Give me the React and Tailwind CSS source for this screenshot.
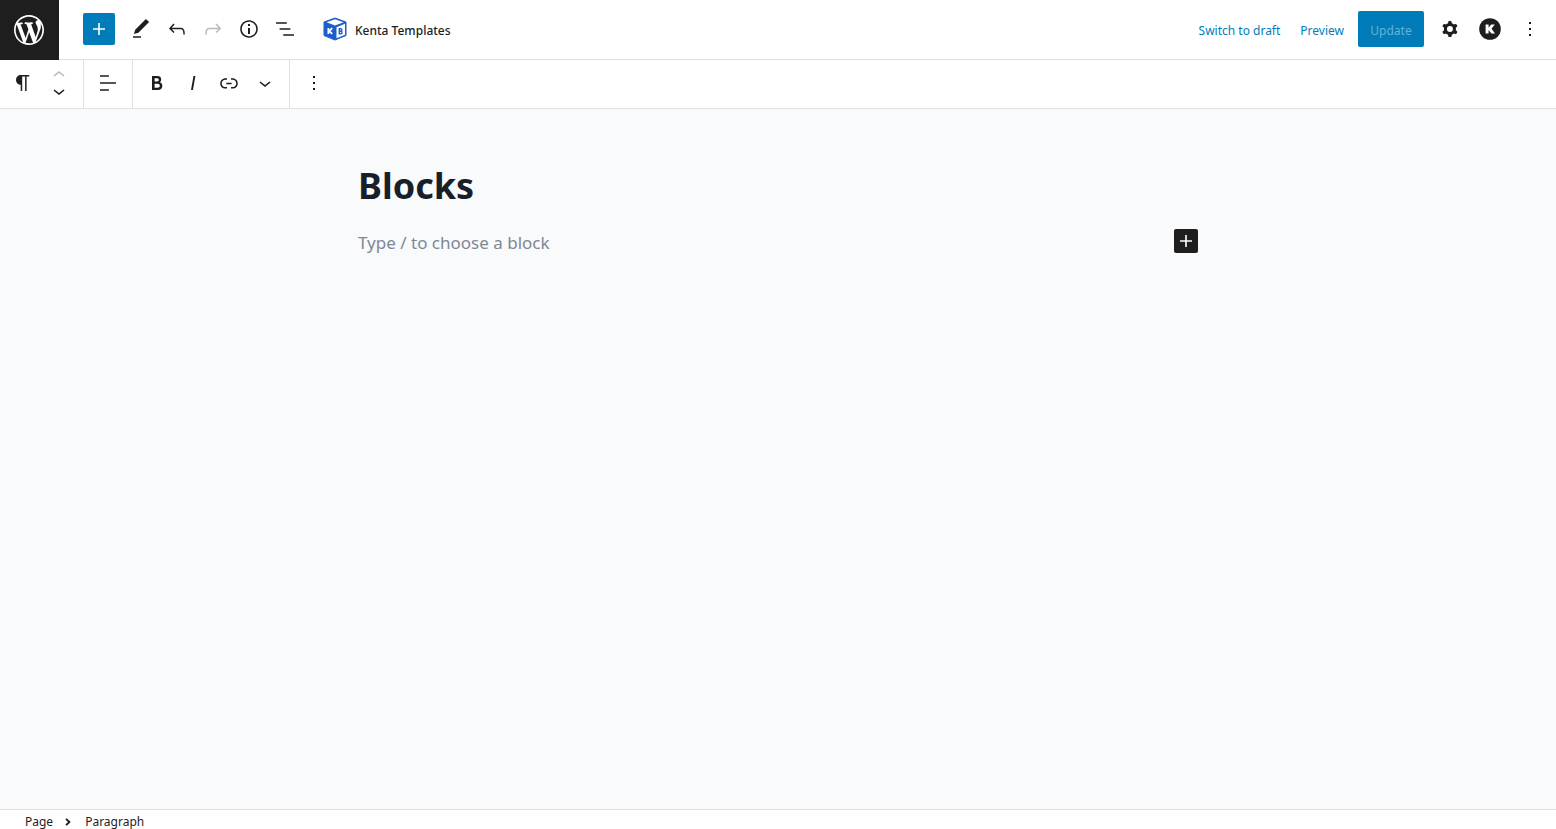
import React from 'react';
import clsx from 'clsx';

/**
 * Editor icons, all on a 24px grid
 */
const ICONS = {
  plus: 'M18 11.2h-5.2V6h-1.6v5.2H6v1.6h5.2V18h1.6v-5.2H18z',
  edit: 'M20.1 5.1L16.9 2 6.2 12.7l-1.3 4.4 4.5-1.3L20.1 5.1zM4 20.8h8v-1.5H4v1.5z',
  undo: 'M18.3 11.7c-.6-.6-1.4-.9-2.3-.9H6.7l2.9-3.3-1.1-1-4.5 5L8.5 16l1-1-2.7-2.7H16c.5 0 .9.2 1.3.5 1 1 1 3.4 1 4.5v.3h1.5v-.2c0-1.5 0-4.3-1.5-5.7z',
  redo: 'M15.6 6.5l-1.1 1 2.9 3.3H8c-.9 0-1.7.3-2.3.9-1.4 1.5-1.4 4.2-1.4 5.6v.2h1.5v-.3c0-1.1 0-3.5 1-4.5.3-.3.7-.5 1.3-.5h9.2L14.5 15l1.1 1.1 4.6-4.6-4.6-5z',
  info: 'M12 3.2c-4.8 0-8.8 3.9-8.8 8.8 0 4.8 3.9 8.8 8.8 8.8 4.8 0 8.8-3.9 8.8-8.8 0-4.8-4-8.8-8.8-8.8zm0 16c-4 0-7.2-3.3-7.2-7.2C4.8 8 8 4.8 12 4.8s7.2 3.3 7.2 7.2c0 4-3.2 7.2-7.2 7.2zM11 17h2v-6h-2v6zm0-8h2V7h-2v2z',
  listView: 'M13.8 5.2H3v1.5h10.8V5.2zm-3.6 12v1.5H21v-1.5H10.2zm7.2-6H6.6v1.5h10.8v-1.5z',
  paragraph: 'M18.3 4H9.9v-.1l-.9.2c-2.3.4-4 2.4-4 4.8s1.7 4.4 4 4.8l.7.1V20h1.5V5.5h2.9V20h1.5V5.5h2.7V4z',
  chevronUp: 'M6.5 12.4L12 8l5.5 4.4-.9 1.2L12 10l-4.5 3.6-1-1.2z',
  chevronDown: 'M17.5 11.6L12 16l-5.5-4.4.9-1.2L12 14l4.5-3.6 1 1.2z',
  chevronRight: 'M8.6 6.2l-2 2 4 3.8-4 3.8 2 2 6-5.8z',
  alignLeft: 'M4 19.8h8.9v-1.5H4v1.5zm8.9-15.6H4v1.5h8.9V4.2zm-8.9 7v1.5h16v-1.5H4z',
  bold: 'M14.7 11.3c1-.6 1.5-1.6 1.5-3 0-2.3-1.3-3.4-4-3.4H7v14h5.8c1.4 0 2.5-.3 3.3-1 .8-.7 1.2-1.7 1.2-2.9.1-1.9-.8-3.1-2.6-3.7zm-5.1-4h2.3c.6 0 1.1.1 1.4.4.3.3.5.7.5 1.2s-.2 1-.5 1.2c-.3.3-.8.4-1.4.4H9.6V7.3zm4.6 9c-.4.3-1 .4-1.7.4H9.6v-3.9h2.9c.7 0 1.3.2 1.7.5.4.3.6.8.6 1.5s-.2 1.2-.6 1.5z',
  italic: 'M12.5 5L10 19h1.9l2.5-14z',
  link: 'M15.6 7.2H14v1.5h1.6c2 0 3.7 1.7 3.7 3.7s-1.7 3.7-3.7 3.7H14v1.5h1.6c2.8 0 5.2-2.3 5.2-5.2 0-2.9-2.3-5.2-5.2-5.2zM4.7 12.4c0-2 1.7-3.7 3.7-3.7H10V7.2H8.4c-2.9 0-5.2 2.3-5.2 5.2 0 2.9 2.3 5.2 5.2 5.2H10v-1.5H8.4c-2 0-3.7-1.7-3.7-3.7zm4.6.9h5.3v-1.5H9.3v1.5z',
  more: 'M13 19h-2v-2h2v2zm0-6h-2v-2h2v2zm0-6h-2V5h2v2z',
  cog: 'M10.289 4.836A1 1 0 0111.275 4h1.306a1 1 0 01.987.836l.244 1.466c.787.26 1.503.679 2.108 1.218l1.393-.522a1 1 0 011.216.437l.653 1.13a1 1 0 01-.23 1.273l-1.148.944a6.025 6.025 0 010 2.435l1.149.946a1 1 0 01.23 1.272l-.653 1.13a1 1 0 01-1.216.437l-1.394-.522c-.605.54-1.32.958-2.108 1.218l-.244 1.466a1 1 0 01-.987.836h-1.306a1 1 0 01-.986-.836l-.244-1.466a5.995 5.995 0 01-2.108-1.218l-1.394.522a1 1 0 01-1.217-.436l-.653-1.131a1 1 0 01.23-1.272l1.149-.946a6.026 6.026 0 010-2.435l-1.148-.944a1 1 0 01-.23-1.272l.653-1.131a1 1 0 011.217-.437l1.393.522a5.994 5.994 0 012.108-1.218l.244-1.466zM14.929 12a3 3 0 11-6 0 3 3 0 016 0z',
};

const Icon = ({ name, className = 'size-6' }) => (
  <svg viewBox="0 0 24 24" fill="currentColor" fillRule="evenodd" className={className} aria-hidden="true">
    <path d={ICONS[name]} />
  </svg>
);

const IconButton = ({ icon, label, disabled, className = 'size-9' }) => (
  <button
    type="button"
    aria-label={label}
    disabled={disabled}
    className={clsx('flex shrink-0 items-center justify-center disabled:opacity-30', className)}
  >
    <Icon name={icon} />
  </button>
);

const WordPressLogo = () => (
  <svg viewBox="-2 -2 24 24" fill="currentColor" className="size-9" aria-hidden="true">
    <path d="M20 10c0-5.51-4.49-10-10-10C4.48 0 0 4.49 0 10c0 5.52 4.48 10 10 10 5.51 0 10-4.48 10-10zM7.78 15.37L4.37 6.22c.55-.02 1.17-.08 1.17-.08.5-.06.44-1.13-.06-1.11 0 0-1.45.11-2.37.11-.18 0-.37 0-.58-.01C4.12 2.69 6.87 1.11 10 1.11c2.33 0 4.45.87 6.05 2.34-.68-.11-1.65.39-1.65 1.58 0 .74.45 1.36.9 2.1.35.61.55 1.36.55 2.46 0 1.49-1.4 5-1.4 5l-3.03-8.37c.54-.02.82-.17.82-.17.5-.05.44-1.25-.06-1.22 0 0-1.44.12-2.38.12-.87 0-2.33-.12-2.33-.12-.5-.03-.56 1.2-.06 1.22l.92.08 1.26 3.41zM17.41 10c.24-.64.74-1.87.43-4.25.7 1.29 1.05 2.71 1.05 4.25 0 3.29-1.73 6.24-4.4 7.78.97-2.59 1.94-5.2 2.92-7.78zM6.1 18.09C3.12 16.65 1.11 13.53 1.11 10c0-1.3.23-2.48.72-3.59C3.25 10.3 4.67 14.2 6.1 18.09zm4.03-6.63l2.58 6.98c-.86.29-1.76.45-2.71.45-.79 0-1.57-.11-2.29-.33.81-2.38 1.62-4.74 2.42-7.1z" />
  </svg>
);

// Cube with a K on the left face and a B on the right one
const KentaLogo = () => (
  <svg viewBox="0 0 24 24" className="size-6" aria-hidden="true">
    <path d="M12 1L23 5v13.500L12 23 1 18.500V5z" fill="#1c5fcb" stroke="#1c5fcb" strokeLinejoin="round" />
    <path d="M12 2.200l8.500 3L12 8.600l-8.500-3.400z" fill="#fff" />
    <path d="M13.500 10.300l8.500-3.500v11l-8.500 3.500z" fill="#fff" />
    <path d="M5.400 11v6M9.200 11.200l-3 2.800 3 2.800" fill="none" stroke="#fff" strokeWidth="1.800" />
    <path d="M16.300 11.800v5h1.500c1.700 0 1.700-2.600 0-2.600 1.400 0 1.400-2.400 0-2.400zM16.300 14.200h1.500" fill="none" stroke="#1c5fcb" strokeWidth="1.400" />
  </svg>
);

const KentaBadge = () => (
  <svg viewBox="0 0 24 24" className="size-6" aria-hidden="true">
    <circle cx="12" cy="12" r="10.800" fill="#1e1e1e" />
    <path d="M7.600 7.600h3v3.200l2.600-3.200h3.600L13.500 11.700l3.600 4.700h-3.700l-2.800-3.500v3.500h-3z" fill="#fff" />
  </svg>
);

const Header = () => (
  <header className="flex h-[60px] shrink-0 border-b border-[#e0e0e0]">
    <a
      href="#dashboard"
      aria-label="View Pages"
      className="-mb-px flex w-[59px] shrink-0 items-center justify-center bg-[#1e1e1e] pr-px text-white"
    >
      <WordPressLogo />
    </a>

    <div className="flex flex-1 items-center pb-px pl-6">
      <IconButton icon="plus" label="Toggle block inserter" className="mr-2 size-8 rounded-xs bg-[#007cba] text-white" />
      <IconButton icon="edit" label="Tools" />
      <IconButton icon="undo" label="Undo" />
      <IconButton icon="redo" label="Redo" disabled />
      <IconButton icon="info" label="Details" />
      <IconButton icon="listView" label="List View" />
      <button type="button" className="ml-5 flex items-center gap-2 text-xs font-medium">
        <KentaLogo />
        <span className="pt-1">Kenta Templates</span>
      </button>
    </div>

    <div className="flex items-center pr-2 pb-px text-xs">
      <button type="button" className="pt-1 text-[#007cba]">Switch to draft</button>
      <button type="button" className="ml-5 pt-1 text-[#007cba]">Preview</button>
      <button type="button" disabled className="ml-3.5 h-9 w-[66px] rounded-xs bg-[#007cba] pt-1 text-[#66b0d6]">
        Update
      </button>
      <div className="ml-2 flex gap-1">
        <IconButton icon="cog" label="Settings" />
        <button type="button" aria-label="Kenta Blocks" className="flex size-9 items-center justify-center">
          <KentaBadge />
        </button>
        <IconButton icon="more" label="Options" />
      </div>
    </div>
  </header>
);

const BlockToolbar = () => (
  <div role="toolbar" aria-label="Block tools" className="flex h-[49px] shrink-0 border-b border-[#e0e0e0]">
    <div className="flex items-center border-r border-[#e0e0e0] pr-1.5 pb-0.5 pl-[5px]">
      <IconButton icon="paragraph" label="Paragraph" />
      <div className="flex flex-col items-center">
        <IconButton icon="chevronUp" label="Move up" disabled className="h-4 w-9" />
        <IconButton icon="chevronDown" label="Move down" className="h-4 w-9" />
      </div>
    </div>
    <div className="flex items-center border-r border-[#e0e0e0] px-1.5 pb-0.5">
      <IconButton icon="alignLeft" label="Align text" />
    </div>
    <div className="flex items-center border-r border-[#e0e0e0] px-1.5 pb-0.5">
      <IconButton icon="bold" label="Bold" />
      <IconButton icon="italic" label="Italic" />
      <IconButton icon="link" label="Link" />
      <IconButton icon="chevronDown" label="More" />
    </div>
    <div className="flex items-center px-1.5 pb-0.5">
      <IconButton icon="more" label="Options" />
    </div>
  </div>
);

const App = () => {
  return (
    <div className="flex h-screen flex-col overflow-hidden bg-white font-['Noto_Sans','Open_Sans',sans-serif] text-[#1e1e1e]">
      <Header />
      <BlockToolbar />

      {/* Canvas */}
      <main className="flex-1 overflow-auto bg-[#f9fafc] px-6 pt-12">
        <div className="mx-auto max-w-[840px]">
          <h1 className="text-4xl leading-[58px] font-bold text-[#181f28]">Blocks</h1>
          <div className="mt-3.5 flex items-start justify-between">
            <p className="text-[17px] leading-7 text-[#7f8795]">Type / to choose a block</p>
            <IconButton icon="plus" label="Add block" className="size-6 rounded-xs bg-[#1e1e1e] text-white" />
          </div>
        </div>
      </main>

      {/* Block breadcrumb */}
      <footer className="h-5 shrink-0 overflow-hidden border-t border-[#e0e0e0]">
        <nav aria-label="Block breadcrumb" className="flex items-center gap-2 px-[25px] text-xs leading-6">
          <button type="button">Page</button>
          <Icon name="chevronRight" className="size-4" />
          <button type="button">Paragraph</button>
        </nav>
      </footer>
    </div>
  );
};

export default App;
